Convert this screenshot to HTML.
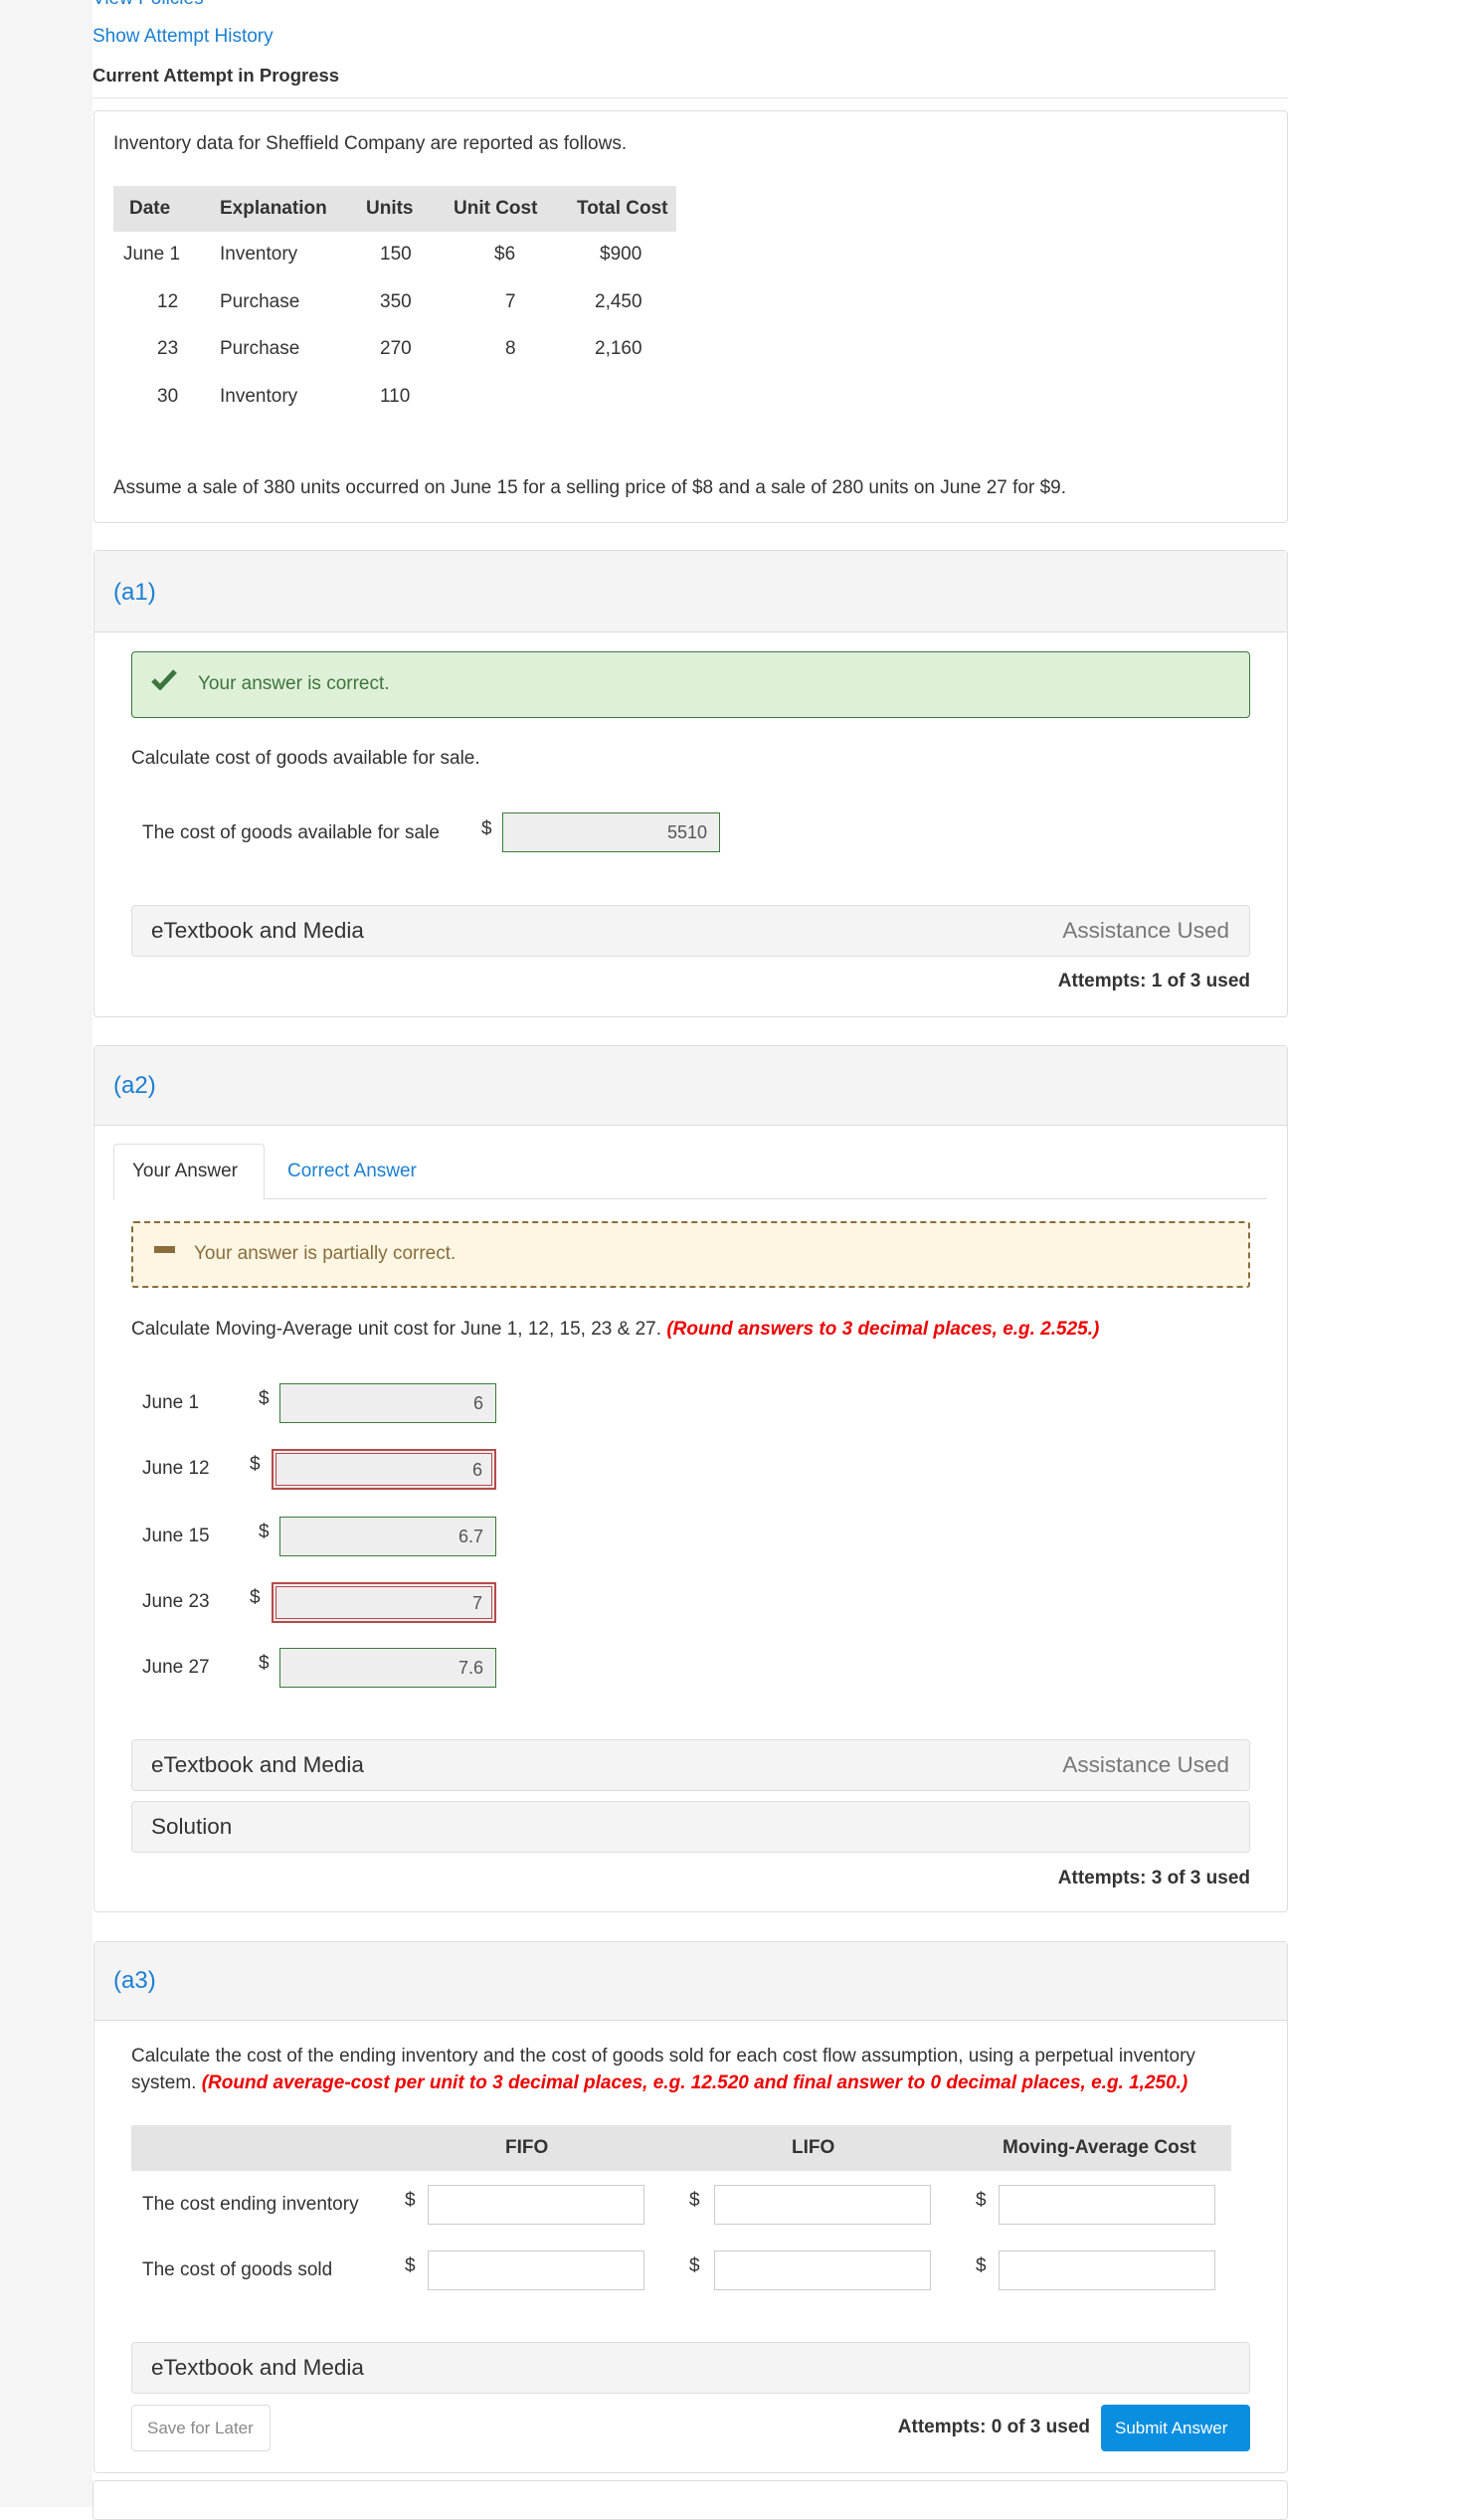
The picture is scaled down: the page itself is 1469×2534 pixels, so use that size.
<!DOCTYPE html>
<html><head><meta charset="utf-8"><style>
*{box-sizing:border-box;margin:0;padding:0}
body{width:1469px;height:2521px;background:#fff;font-family:"Liberation Sans",sans-serif;color:#333;position:relative;overflow:hidden}
.side{position:absolute;left:0;top:0;width:93px;height:2521px;background:#f5f5f5}
.t{position:absolute;white-space:nowrap;line-height:22px;font-size:19px}
.box{position:absolute;left:94px;width:1201px;border:1px solid #ddd;border-radius:4px;background:#fff}
.hdr{position:absolute;left:95px;width:1199px;background:#f4f4f4;border-bottom:1px solid #ddd}
.bar{position:absolute;left:132px;width:1125px;height:52px;background:#f4f4f4;border:1px solid #ddd;border-radius:4px}
.inp{position:absolute;height:40px;background:#eee;border:1px solid #3a7a3a;text-align:right;padding-right:12px;line-height:38px;font-size:18px;color:#555}
.red{background:#eee;border:2px solid #b94a48;outline:1px solid #b94a48;outline-offset:-5px}
.emp{position:absolute;height:40px;width:218px;background:#fff;border:1px solid #ccc}
.lbl{color:#1a7fd4}
.b{font-weight:bold}
.rd{color:#e00;font-style:italic;font-weight:bold}
.big{font-size:22.5px!important}
</style></head><body>
<div class="side"></div>
<div class="t lbl" style="left:93px;top:-12px">View Policies</div>
<div class="t lbl" style="left:93px;top:26px">Show Attempt History</div>
<div class="t b" style="left:93px;top:65px;font-size:18.5px">Current Attempt in Progress</div>
<div style="position:absolute;left:93px;top:98px;width:1202px;height:1px;background:#e5e5e5"></div>

<div class="box" style="top:111px;height:415px"></div>
<div class="t" style="left:114px;top:134px">Inventory data for Sheffield Company are reported as follows.</div>
<div style="position:absolute;left:114px;top:187px;width:566px;height:46px;background:#e4e4e4"></div>
<div class="t b" style="left:130px;top:199px">Date</div>
<div class="t b" style="left:221px;top:199px">Explanation</div>
<div class="t b" style="left:368px;top:199px">Units</div>
<div class="t b" style="left:456px;top:199px">Unit Cost</div>
<div class="t b" style="left:580px;top:199px">Total Cost</div>
<div class="t" style="left:124px;top:245px">June 1</div><div class="t" style="left:221px;top:245px">Inventory</div><div class="t" style="left:382px;top:245px">150</div><div class="t" style="left:497px;top:245px">$6</div><div class="t" style="left:603px;top:245px">$900</div>
<div class="t" style="left:158px;top:293px">12</div><div class="t" style="left:221px;top:293px">Purchase</div><div class="t" style="left:382px;top:293px">350</div><div class="t" style="left:508px;top:293px">7</div><div class="t" style="left:598px;top:293px">2,450</div>
<div class="t" style="left:158px;top:340px">23</div><div class="t" style="left:221px;top:340px">Purchase</div><div class="t" style="left:382px;top:340px">270</div><div class="t" style="left:508px;top:340px">8</div><div class="t" style="left:598px;top:340px">2,160</div>
<div class="t" style="left:158px;top:388px">30</div><div class="t" style="left:221px;top:388px">Inventory</div><div class="t" style="left:382px;top:388px">110</div>
<div class="t" style="left:114px;top:480px">Assume a sale of 380 units occurred on June 15 for a selling price of $8 and a sale of 280 units on June 27 for $9.</div>

<!-- a1 -->
<div class="box" style="top:553px;height:470px"></div>
<div class="hdr" style="top:554px;height:82px"></div>
<div class="t lbl" style="left:114px;top:583px;font-size:24px;line-height:26px">(a1)</div>
<div style="position:absolute;left:132px;top:655px;width:1125px;height:67px;background:#dff0d8;border:1px solid #3c763d;border-radius:4px"></div>
<svg style="position:absolute;left:152px;top:672px" width="26" height="22" viewBox="0 0 26 22"><path d="M2 12 L9 19 L24 3" stroke="#3c763d" stroke-width="5" fill="none"/></svg>
<div class="t" style="left:199px;top:677px;color:#3c763d">Your answer is correct.</div>
<div class="t" style="left:132px;top:752px">Calculate cost of goods available for sale.</div>
<div class="t" style="left:143px;top:827px">The cost of goods available for sale</div>
<div class="t" style="left:484px;top:823px">$</div>
<div class="inp" style="left:505px;top:817px;width:219px">5510</div>
<div class="bar" style="top:910px"></div>
<div class="t big" style="left:152px;top:925px">eTextbook and Media</div>
<div class="t big" style="right:233px;top:925px;color:#777">Assistance Used</div>
<div class="t b" style="right:212px;top:976px">Attempts: 1 of 3 used</div>

<!-- a2 -->
<div class="box" style="top:1051px;height:872px"></div>
<div class="hdr" style="top:1052px;height:80px"></div>
<div class="t lbl" style="left:114px;top:1079px;font-size:24px;line-height:26px">(a2)</div>
<div style="position:absolute;left:114px;top:1205px;width:1160px;height:1px;background:#ddd"></div>
<div style="position:absolute;left:114px;top:1150px;width:152px;height:56px;background:#fff;border:1px solid #ddd;border-bottom:none;border-radius:4px 4px 0 0"></div>
<div class="t" style="left:133px;top:1167px">Your Answer</div>
<div class="t lbl" style="left:289px;top:1167px">Correct Answer</div>
<div style="position:absolute;left:132px;top:1228px;width:1125px;height:67px;background:#fcf6e3;border:2px dashed #8a6d3b;border-radius:3px"></div>
<div style="position:absolute;left:155px;top:1253px;width:21px;height:7px;background:#8a6d3b"></div>
<div class="t" style="left:195px;top:1250px;color:#8a6d3b">Your answer is partially correct.</div>
<div class="t" style="left:132px;top:1326px">Calculate Moving-Average unit cost for June 1, 12, 15, 23 &amp; 27. <span class="rd">(Round answers to 3 decimal places, e.g. 2.525.)</span></div>
<div class="t" style="left:143px;top:1400px">June 1</div><div class="t" style="left:260px;top:1396px">$</div><div class="inp" style="left:281px;top:1391px;width:218px">6</div>
<div class="t" style="left:143px;top:1466px">June 12</div><div class="t" style="left:251px;top:1462px">$</div><div class="inp red" style="left:273px;top:1457px;width:226px;height:41px">6</div>
<div class="t" style="left:143px;top:1534px">June 15</div><div class="t" style="left:260px;top:1530px">$</div><div class="inp" style="left:281px;top:1525px;width:218px">6.7</div>
<div class="t" style="left:143px;top:1600px">June 23</div><div class="t" style="left:251px;top:1596px">$</div><div class="inp red" style="left:273px;top:1591px;width:226px;height:41px">7</div>
<div class="t" style="left:143px;top:1666px">June 27</div><div class="t" style="left:260px;top:1662px">$</div><div class="inp" style="left:281px;top:1657px;width:218px">7.6</div>
<div class="bar" style="top:1749px"></div>
<div class="t big" style="left:152px;top:1764px">eTextbook and Media</div>
<div class="t big" style="right:233px;top:1764px;color:#777">Assistance Used</div>
<div class="bar" style="top:1811px"></div>
<div class="t big" style="left:152px;top:1826px">Solution</div>
<div class="t b" style="right:212px;top:1878px">Attempts: 3 of 3 used</div>

<!-- a3 -->
<div class="box" style="top:1952px;height:535px"></div>
<div class="hdr" style="top:1953px;height:79px"></div>
<div class="t lbl" style="left:114px;top:1979px;font-size:24px;line-height:26px">(a3)</div>
<div class="t" style="left:132px;top:2057px;font-size:19px">Calculate the cost of the ending inventory and the cost of goods sold for each cost flow assumption, using a perpetual inventory</div>
<div class="t" style="left:132px;top:2084px;font-size:19px">system. <span class="rd">(Round average-cost per unit to 3 decimal places, e.g. 12.520 and final answer to 0 decimal places, e.g. 1,250.)</span></div>
<div style="position:absolute;left:132px;top:2137px;width:1106px;height:46px;background:#e4e4e4"></div>
<div class="t b" style="left:508px;top:2149px">FIFO</div>
<div class="t b" style="left:796px;top:2149px">LIFO</div>
<div class="t b" style="left:1008px;top:2149px">Moving-Average Cost</div>
<div class="t" style="left:143px;top:2206px">The cost ending inventory</div>
<div class="t" style="left:143px;top:2272px">The cost of goods sold</div>
<div class="t" style="left:407px;top:2202px">$</div><div class="emp" style="left:430px;top:2197px"></div>
<div class="t" style="left:693px;top:2202px">$</div><div class="emp" style="left:718px;top:2197px"></div>
<div class="t" style="left:981px;top:2202px">$</div><div class="emp" style="left:1004px;top:2197px"></div>
<div class="t" style="left:407px;top:2268px">$</div><div class="emp" style="left:430px;top:2263px"></div>
<div class="t" style="left:693px;top:2268px">$</div><div class="emp" style="left:718px;top:2263px"></div>
<div class="t" style="left:981px;top:2268px">$</div><div class="emp" style="left:1004px;top:2263px"></div>
<div class="bar" style="top:2355px"></div>
<div class="t big" style="left:152px;top:2370px">eTextbook and Media</div>
<div style="position:absolute;left:132px;top:2418px;width:140px;height:47px;border:1px solid #ddd;border-radius:4px;background:#fff"></div>
<div class="t" style="left:148px;top:2431px;font-size:17px;color:#888">Save for Later</div>
<div class="t b" style="right:373px;top:2430px">Attempts: 0 of 3 used</div>
<div style="position:absolute;left:1107px;top:2418px;width:150px;height:47px;background:#0a8ee0;border-radius:4px"></div>
<div class="t" style="left:1121px;top:2431px;font-size:17px;color:#fff">Submit Answer</div>
<div style="position:absolute;left:93px;top:2494px;width:1202px;height:40px;border:1px solid #ddd;border-radius:4px"></div>
</body></html>
